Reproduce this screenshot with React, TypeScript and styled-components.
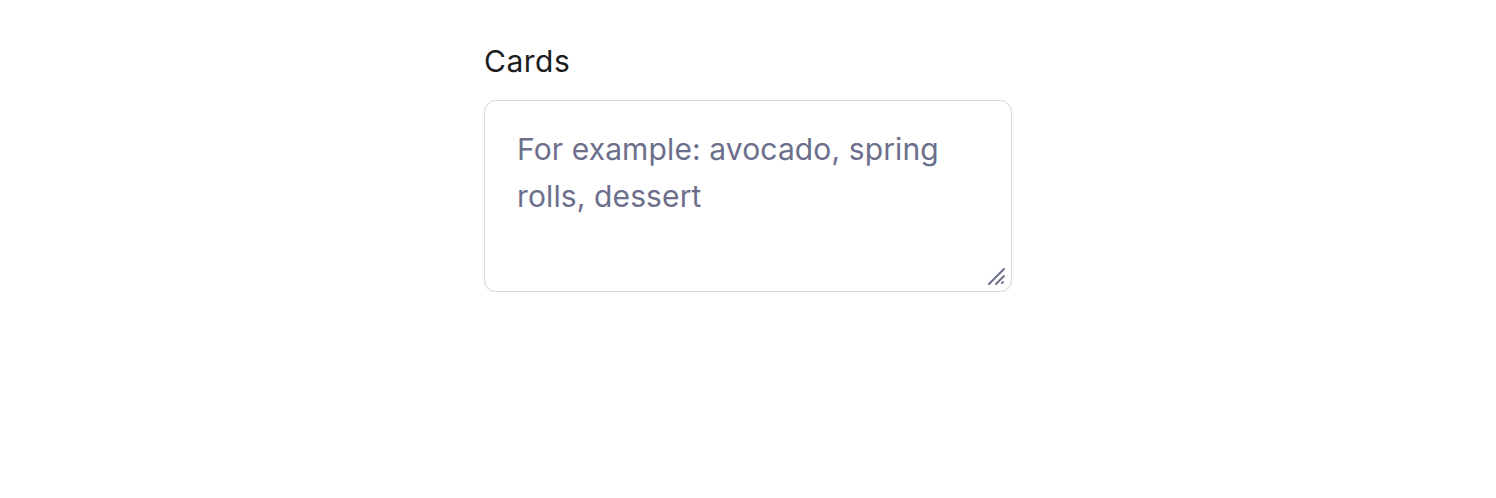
import React from 'react';
import styled, { createGlobalStyle } from 'styled-components';

const GlobalStyle = createGlobalStyle`
  html, body {
    margin: 0;
    padding: 0;
    background: #ffffff;
  }
  body {
    font-family: Inter, "Noto Sans", "Liberation Sans", sans-serif;
  }
`;

const Page = styled.div`
  display: flex;
  justify-content: center;
  padding-top: 40px;
`;

const Field = styled.div`
  display: flex;
  flex-direction: column;
  width: 528px;
`;

const Label = styled.label`
  font-size: 30px;
  line-height: 42px;
  letter-spacing: 0.5px;
  color: #1c1c1e;
  margin-bottom: 18px;
`;

const InputWrap = styled.div`
  position: relative;
  display: flex;
`;

const TextArea = styled.textarea`
  box-sizing: border-box;
  width: 100%;
  height: 192px;
  padding: 25px 32px;
  border: 1px solid #d9d9e0;
  border-radius: 12px;
  box-shadow: 0 1px 2px rgba(20, 20, 40, 0.06);
  font-family: inherit;
  font-size: 30px;
  line-height: 47px;
  letter-spacing: 0.12px;
  color: #1c1c1e;
  resize: none;
  outline: none;

  &::placeholder {
    color: #6c6f8c;
    opacity: 1;
  }
`;

const Grip = styled.svg`
  position: absolute;
  right: 6px;
  bottom: 6px;
  width: 20px;
  height: 20px;
  pointer-events: none;
`;

export default function App() {
  return (
    <>
      <GlobalStyle />
      <Page>
        <Field>
          <Label htmlFor="cards">Cards</Label>
          <InputWrap>
            <TextArea id="cards" placeholder="For example: avocado, spring rolls, dessert" />
            <Grip viewBox="0 0 20 20" fill="none" stroke="#6c6f8c" strokeWidth="2" strokeLinecap="round">
              <path d="M3 18 L18 3" />
              <path d="M10 18 L18 10" />
              <path d="M16 17 L17 16" />
            </Grip>
          </InputWrap>
        </Field>
      </Page>
    </>
  );
}
